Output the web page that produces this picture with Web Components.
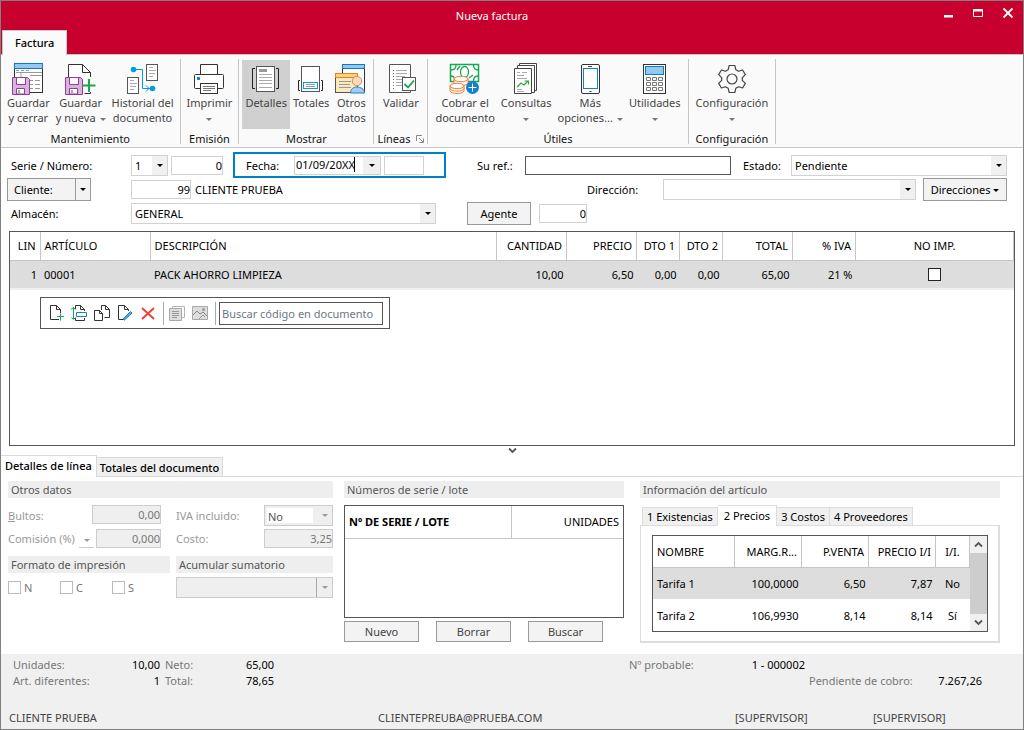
<!DOCTYPE html>
<html lang="es">
<head>
<meta charset="utf-8">
<meta name="viewport" content="width=device-width, initial-scale=1">
<title>Nueva factura</title>
<style>
  html, body { margin: 0; }
  body { font: 11px/15px "Noto Sans", "Open Sans", sans-serif; color: #000; background: #fff; }
</style>
</head>
<body>
<invoice-window></invoice-window>

<script>
/* Registers a custom element from its styles and markup. */
const base = `
  *, *::before, *::after { box-sizing: border-box; }
  :host { display: block; box-sizing: border-box; }
  button, input, select { font: inherit; color: inherit; margin: 0; border-radius: 0; }
  button { padding: 0; }
  input[type=text] { height: 19px; padding: 0 3px; border: 1px solid #d2d2d2; background: #fff; min-width: 0; outline: 0; }
  input.num { text-align: right; padding-right: 0; }
  .combo { position: relative; display: inline-flex; height: 21px; min-width: 0; }
  .combo select { appearance: none; flex: 1; width: 100%; height: 100%; padding: 0 16px 0 3px; border: 1px solid #d2d2d2; background: linear-gradient(#f0f0f0, #f0f0f0) right / 15px 100% no-repeat #fff; opacity: 1; }
  .combo::after { content: ""; position: absolute; right: 5px; top: 9px; border: 3px solid transparent; border-top-color: #000; border-bottom: 0; pointer-events: none; }
  .push { border: 1px solid #999; background: #f3f3f3; height: 23px; }
  .tri { display: inline-block; border: 3px solid transparent; border-top-color: currentColor; border-bottom: 0; vertical-align: middle; }
  table { border-collapse: collapse; width: 100%; table-layout: fixed; }
  th { font-weight: 400; text-align: left; }
  th, td { white-space: nowrap; overflow: hidden; text-overflow: ellipsis; padding: 0 4px; }
  .r { text-align: right; }
  .c { text-align: center; }
`;
function define(name, css, html, setup) {
  const template = document.createElement('template');
  template.innerHTML = `<style>${base}${css}</style>${html}`;
  customElements.define(name, class extends HTMLElement {
    constructor() {
      super();
      this.attachShadow({ mode: 'open' }).append(template.content.cloneNode(true));
    }
    connectedCallback() { if (setup) setup(this, this.shadowRoot); }
  });
}

/* ---- icons ---- */
const floppy = `<path d="M.5 14.500h15l2 2v15h-17z" fill="#d9b3dd" stroke="#8f3f97"/><path d="M4.500 14.500h9v7h-9z" fill="#fafafa" stroke="#8f3f97"/><path d="M4.500 31v-5.500h8V31z" fill="#fff" stroke="#8f3f97"/><path d="M7 27v3" stroke="#555"/>`;
const icons = {
  'save-close': [32, `<rect x="2.500" y="1.500" width="28" height="28" fill="#fff" stroke="#333"/><rect x="2.500" y=".5" width="28" height="5" fill="#92c9f1" stroke="#1478c8"/><path d="M4 7.500h3m2 0h3m2 0h3M4 9.500h26M18 12.500h12M9 9v5M18 17.500h3m2 0h5m-10 4h3m2 0h5m-10 4h3m2 0h5" stroke="#999" fill="none"/>${floppy}`],
  'save-new': [32, `<path d="M3.500 30V1.500h14l8 8V14M25.500 29v1.500h-6" fill="#fff" stroke="#333"/><path d="M17.500 1.500v8h8z" fill="#fff" stroke="#333"/>${floppy}<path d="M24 16v13M17.500 22.500h13" stroke="#16a74f" stroke-width="2" fill="none"/>`],
  history: [32, `<rect x="19.500" y="1.500" width="11" height="16" fill="#fff" stroke="#555"/><path d="M22 4.500h4m-4 3h7m-7 3h6m-6 3h4" stroke="#aaa"/><rect x=".5" y="14.500" width="11" height="16" fill="#fff" stroke="#555"/><path d="M3 17.500h4m-4 3h7m-7 3h6m-6 3h4" stroke="#aaa"/><path d="M6 6.500h9.500v19h10M19 22.500l3 3-3 3" fill="none" stroke="#069cdf"/><circle cx="6.500" cy="6.500" r="2.800" fill="#069cdf"/><circle cx="25.500" cy="25.500" r="2.800" fill="#069cdf"/>`],
  print: [32, `<path d="M7.500 11V1.500h17V11" fill="#fff" stroke="#333"/><rect x="1.500" y="11.500" width="29" height="14" rx="1" fill="#fff" stroke="#333"/><rect x="7.500" y="20.500" width="17" height="10" fill="#fff" stroke="#333"/><rect x="4" y="14" width="3" height="3" fill="#1a84d0"/><path d="M10 23.500h12m-12 2h12m-12 2h8" stroke="#777"/>`],
  details: [32, `<rect x="6.500" y="3.500" width="18" height="25" fill="#fff" stroke="#555"/><path d="M5 5.500H2.500v20H5M26 5.500h2.500v20H26" fill="none" stroke="#222"/><rect x="9" y="6" width="8" height="3" fill="#999"/><path d="M9 11.500h13m-13 3h13m-13 3h13m-13 3h13m-13 4h13" stroke="#aaa"/>`],
  totals: [32, `<rect x="6.500" y="3.500" width="18" height="25" fill="#fff" stroke="#555"/><path d="M5 17.500H3.500v10H5M26 17.500h1.500v10H26" fill="none" stroke="#222"/><rect x="8.500" y="19.500" width="14" height="6" fill="#fff" stroke="#069cdf"/><path d="M11 21.500h9m-9 2h9" stroke="#999"/>`],
  other: [32, `<rect x="7.500" y="1.500" width="22" height="28" fill="#fff" stroke="#333"/><rect x="7.500" y="1.500" width="22" height="4" fill="#92c9f1" stroke="#1478c8"/><rect x=".5" y="10.500" width="22" height="19" fill="#fbe9bd" stroke="#555"/><rect x=".5" y="10.500" width="22" height="4" fill="#ffd37e" stroke="#e08326"/><path d="M4 18.500h12m-12 3h11m-11 3h12" stroke="#999"/><path d="M15.500 30c0-4 3-6 6.500-6s7.500 2 7.500 6z" fill="#a3cdee" stroke="#1f7fc6"/><circle cx="22" cy="18" r="4.700" fill="#fbdabf" stroke="#e08a52"/>`],
  validate: [32, `<path d="M4.500 1.500h21v28h-21z" fill="#fff" stroke="#555"/><path d="M11 7.500h11m-11 3h11m-11 3h9m-9 3h6m-6 3h6m-6 3h6" stroke="#aaa"/><path d="M8.500 7v1m0 5v1m0 5v1m0 5v1" stroke="#d33"/><path d="M8.500 10v1m0 5v1m0 5v1" stroke="#16a74f"/><rect x="17.500" y="14.500" width="13" height="13" fill="#fff" stroke="#555"/><path d="M19.500 21l3.500 3.500 6-7" fill="none" stroke="#16a74f" stroke-width="1.800"/>`],
  cash: [32, `<path d="M1.500 1.500h28v17h-28z" fill="#fff" stroke="#16a74f" stroke-width="1.500"/><ellipse cx="15.500" cy="9" rx="4" ry="5.500" fill="none" stroke="#16a74f" stroke-width="1.300"/><path d="M2 7c3 0 5-2 5-5m22.500 5c-3 0-5-2-5-5M2 13c2 0 3 1 3 2m24.500-2c-3 0-5 2-5 5M8 7l3-4m9 12 4-3" fill="none" stroke="#16a74f" stroke-width="1.300"/><path d="M5 15.500v4c0 4 14 4 14 0v-4" fill="#fff" stroke="#ee7b30"/><ellipse cx="12" cy="16" rx="7" ry="2.700" fill="#fff" stroke="#ee7b30"/><path d="M1 22.500v5c0 4 14 4 14 0v-5" fill="#fff" stroke="#ee7b30"/><ellipse cx="8" cy="23" rx="7" ry="2.700" fill="#fff" stroke="#ee7b30"/><path d="M1 25.500c1 3.500 13 3.500 14 0" fill="none" stroke="#ee7b30"/><circle cx="23.500" cy="24.500" r="6.500" fill="#1481cc"/><path d="M23.500 20.500v8m-4-4h8" stroke="#fff"/>`],
  reports: [32, `<path d="M9.500.5h17v27h-17z" fill="#fff" stroke="#444"/><path d="M7.500 2.500h17v27h-17z" fill="#fff" stroke="#444"/><path d="M4.500 5.500h17v25h-17z" fill="#fff" stroke="#444"/><path d="M7 9.500h3m2 0h5M7 12.500h7m-7 3h10m-10 11h5m-5 2h7" stroke="#aaa"/><path d="M7 24l4-4 3 2 4-4m-3.500 0H18.500v3.500" fill="none" stroke="#36a832" stroke-width="1.200"/>`],
  phone: [32, `<rect x="7.500" y="1.500" width="18" height="29" rx="1.500" fill="#fff" stroke="#333"/><rect x="9.500" y="5.500" width="14" height="20" fill="#fff" stroke="#1481cc"/><path d="M14 3.500h4M15.500 28.500h2" stroke="#444"/>`],
  calc: [32, `<rect x="4.500" y="1.500" width="22" height="29" fill="#fff" stroke="#333"/><rect x="6.500" y="3.500" width="18" height="8" fill="#92c9f1" stroke="#1478c8"/><path d="M7.500 14.500h4v3h-4zm6 0h4v3h-4zm6 0h4v3h-4zm-12 5h4v3h-4zm6 0h4v3h-4zm6 0h4v3h-4zm-12 5h4v3h-4zm6 0h4v3h-4zm6 0h4v3h-4z" fill="#fff" stroke="#777"/>`],
  gear: [32, `<path d="M13.200 3.500h5.600l1 4.200 2.800 1.600 4-1.300 2.700 4.600-3 3v2.800l3 3-2.700 4.600-4-1.300-2.800 1.600-1 4.200h-5.600l-1-4.200-2.800-1.600-4 1.300-2.700-4.600 3-3v-2.800l-3-3 2.700-4.600 4 1.300 2.800-1.600z" transform="translate(0 -1)" fill="none" stroke="#444" stroke-width="1.200" stroke-linejoin="round"/><circle cx="16" cy="16" r="5" fill="none" stroke="#444" stroke-width="1.200"/>`],
  'doc-add': [16, `<path d="M11 14.500H2.500v-14h6l4 4V8M8.500.5v4h4" fill="none" stroke="#333"/><path d="M12.500 8.500v7M9 11.500h7" stroke="#16a74f"/>`],
  'doc-insert': [16, `<path d="M4.500 4V.5h5l4 4V6M9.500.5v4h4M4.500 13v2.500h9V13" fill="none" stroke="#333"/><path d="M5.500 7.500h10v4h-10z" fill="#fff" stroke="#1481cc"/><path d="M2.500 2v12M0 4.500l2.500-2 2 2m-4 8 2 2 2-2" fill="none" stroke="#16a74f"/>`],
  'doc-copy': [16, `<path d="M7.500 5V.5h4l4 4v8h-5M11.500.5v4h4" fill="none" stroke="#333"/><path d="M.5 5.500h5l3 3v7h-8zM5.500 5.500v3h3" fill="#fff" stroke="#333"/>`],
  'doc-edit': [16, `<path d="M8 14.500H1.500v-14h6l4 4V6M7.500.5v4h4" fill="none" stroke="#333"/><path d="M6 14l7.500-7.500 1.500 1.500-7.500 7z" fill="#59aae4" stroke="#1481cc"/>`],
  remove: [16, `<path d="M2 3l12 11M14 3L2 14" stroke="#ee4238" stroke-width="2"/>`],
  stack: [16, `<path d="M3.500 3V1.500h12v11H13" fill="none" stroke="#b5b5b5"/><path d="M.5 3.500h12v12H.5z" fill="#ddd" stroke="#aaa"/><path d="M3 6.500h7m-7 2h7m-7 2h7m-7 2h5" stroke="#999"/>`],
  image: [16, `<path d="M.5 1.500h15v13H.5z" fill="#ddd" stroke="#aaa"/><path d="M1 10l4-4 3 3 3-2 4 4" fill="none" stroke="#888"/><path d="M7 14l4-4 2 2" fill="none" stroke="#999"/><circle cx="11.500" cy="4.500" r="1.500" fill="#999"/>`],
  minimize: [12, `<path d="M2 8h9v2.500H2z" fill="#fff"/>`],
  maximize: [12, `<path d="M1.500 2.500h9v7h-9z" fill="none" stroke="#fff"/><path d="M1 2.500h10v2H1z" fill="#fff"/>`],
  close: [12, `<path d="M1.500 1.500l9 9m0-9l-9 9" stroke="#fff" stroke-width="1.800"/>`],
  launcher: [8, `<path d="M.5 6V.5H6M3 3l4 4M7.500 3.500v4h-4" fill="none" stroke="#888"/>`],
  'chevron-down': [9, `<path d="M1 2.500l3.500 3.500L8 2.500" fill="none" stroke="#555" stroke-width="1.800"/>`],
  'chevron-up': [9, `<path d="M1 6.500l3.500-3.500L8 6.500" fill="none" stroke="#555" stroke-width="1.800"/>`]
};
define('ui-icon', `:host { display: inline-flex; } svg { display: block; }`, ``, (el, root) => {
  if (root.querySelector('svg')) return;
  const [size, body] = icons[el.getAttribute('name')];
  root.innerHTML += `<svg width="${size}" height="${size}" viewBox="0 0 ${size} ${size}" fill="none" aria-hidden="true">${body}</svg>`;
});

/* ---- title bar ---- */
define('title-bar', `
  :host { background: #c8002d; color: #fff; }
  .top { display: flex; height: 29px; }
  h1 { flex: 1; margin: 0; padding-left: 50px; font-size: 11px; font-weight: 400; line-height: 29px; text-align: center; }
  .top button { width: 30px; height: 24px; border: 0; background: none; display: flex; align-items: center; justify-content: center; }
  .tabs { display: flex; padding-left: 1px; }
  .tabs button { position: relative; height: 25px; margin-bottom: -1px; padding: 0 12px 1px; border: 1px solid #c8c8c8; border-bottom: 0; background: #fafafa; color: #000; font-weight: 500; }`,
  `<div class="top"><h1>Nueva factura</h1>
    <button aria-label="Minimizar"><ui-icon name="minimize"></ui-icon></button>
    <button aria-label="Maximizar"><ui-icon name="maximize"></ui-icon></button>
    <button aria-label="Cerrar"><ui-icon name="close"></ui-icon></button></div>
  <div class="tabs" role="tablist"><button role="tab" aria-selected="true">Factura</button></div>`);

/* ---- ribbon ---- */
define('ribbon-button', `
  button { display: flex; flex-direction: column; align-items: center; height: 69px; padding: 3px 3px 0; border: 0; background: none; color: #444; }
  :host([selected]) button { background: #d0d0d0; }
  .tri { display: none; margin-left: 4px; color: #777; }
  :host([menu]) .tri { display: inline-block; }
  :host([below]) .tri { margin-left: 0; }
  span { text-align: center; white-space: nowrap; }`,
  `<button><span><slot></slot><i class="tri"></i></span></button>`,
  (el, root) => {
    if (root.querySelector('ui-icon')) return;
    const icon = document.createElement('ui-icon');
    icon.setAttribute('name', el.getAttribute('icon'));
    root.querySelector('button').prepend(icon);
  });
define('ribbon-group', `
  :host { border-right: 1px solid #c6c6c6; padding: 1px 3px 0; }
  :host([roomy]) { padding: 1px 4px 0; }
  .row { display: flex; justify-content: center; height: 72px; }
  footer { display: flex; justify-content: center; align-items: center; gap: 6px; line-height: 13px; color: #111; }`,
  `<div class="row"><slot></slot></div><footer><slot name="label"></slot></footer>`);
define('app-ribbon', `
  :host { display: flex; height: 94px; padding: 4px 0 3px; background: #fafafa; border: solid #c6c6c6; border-width: 1px 0; }
  button { border: 0; background: none; display: flex; }`,
  `<ribbon-group>
    <ribbon-button icon="save-close">Guardar<br>y cerrar</ribbon-button>
    <ribbon-button icon="save-new" menu>Guardar<br>y nueva</ribbon-button>
    <ribbon-button icon="history">Historial del<br>documento</ribbon-button>
    <span slot="label">Mantenimiento</span></ribbon-group>
  <ribbon-group><ribbon-button icon="print" menu below>Imprimir<br></ribbon-button><span slot="label">Emisión</span></ribbon-group>
  <ribbon-group>
    <ribbon-button icon="details" selected>Detalles</ribbon-button>
    <ribbon-button icon="totals">Totales</ribbon-button>
    <ribbon-button icon="other">Otros<br>datos</ribbon-button>
    <span slot="label">Mostrar</span></ribbon-group>
  <ribbon-group><ribbon-button icon="validate">Validar</ribbon-button>
    <span slot="label">Líneas</span><button slot="label" aria-label="Opciones de líneas"><ui-icon name="launcher"></ui-icon></button></ribbon-group>
  <ribbon-group roomy>
    <ribbon-button icon="cash">Cobrar el<br>documento</ribbon-button>
    <ribbon-button icon="reports" menu below>Consultas<br></ribbon-button>
    <ribbon-button icon="phone" menu>Más<br>opciones...</ribbon-button>
    <ribbon-button icon="calc" menu below>Utilidades<br></ribbon-button>
    <span slot="label">Útiles</span></ribbon-group>
  <ribbon-group roomy><ribbon-button icon="gear" menu below>Configuración<br></ribbon-button><span slot="label">Configuración</span></ribbon-group>`);

/* ---- invoice header form ---- */
define('invoice-form', `
  :host { padding: 5px 16px 6px 6px; }
  .row { display: flex; align-items: center; height: 24px; }
  .row:first-child { height: 26px; }
  .row > * { flex: none; }
  .name { width: 124px; padding-left: 4px; }
  .gap { flex: 1; }
  .serie { width: 37px; margin-right: 3px; }
  .n52 { width: 52px; }
  .date { display: flex; align-items: center; width: 213px; height: 26px; margin-left: 10px; padding-left: 11px; border: 2px solid #0080c9; }
  .date label { width: 48px; }
  .picker { display: flex; width: 87px; height: 19px; margin-right: 3px; border: 1px solid #d2d2d2; }
  .picker input { width: 60px; height: 15px; padding: 0 0 0 1px; border: 0; border-right: 1px solid #000; }
  .picker button { width: 17px; margin-left: auto; border: 0; background: #f0f0f0; }
  .picker button, .split button { display: flex; align-items: center; justify-content: center; }
  .date > input { width: 40px; }
  .dark { width: 206px; border-color: #555 !important; }
  .split { display: flex; width: 84px; margin-right: 40px; }
  .split .push:first-child { width: 68px; padding-left: 6px; border-right: 0; justify-content: flex-start; }
  .split .push:last-child { flex: 1; }`,
  `<div class="row">
    <label class="name" for="serie">Serie / Número:</label>
    <span class="combo serie"><select id="serie"><option>1</option></select></span>
    <input class="num n52" type="text" value="0" aria-label="Número">
    <div class="date"><label for="fecha">Fecha:</label>
      <span class="picker"><input id="fecha" type="text" value="01/09/20XX"><button aria-label="Abrir calendario"><i class="tri"></i></button></span>
      <input type="text" aria-label="Hora"></div>
    <label for="ref" style="width:48px;margin-left:31px">Su ref.:</label>
    <input id="ref" class="dark" type="text">
    <label for="estado" style="width:48px;margin-left:12px">Estado:</label>
    <span class="combo" style="flex:1"><select id="estado"><option>Pendiente</option></select></span>
  </div>
  <div class="row">
    <span class="split"><button class="push">Cliente:</button><button class="push" aria-label="Opciones de cliente"><i class="tri"></i></button></span>
    <input class="num" type="text" value="99" aria-label="Código de cliente" style="width:60px;margin-right:4px">
    <span>CLIENTE PRUEBA</span>
    <span class="gap"></span>
    <label for="dir" style="width:76px">Dirección:</label>
    <span class="combo" style="width:253px"><select id="dir"><option></option></select></span>
    <button class="push" style="width:84px;margin-left:7px">Direcciones <i class="tri"></i></button>
  </div>
  <div class="row">
    <label class="name" for="almacen">Almacén:</label>
    <span class="combo" style="width:305px"><select id="almacen"><option>GENERAL</option></select></span>
    <button class="push" style="width:64px;margin:0 8px 0 31px">Agente</button>
    <input class="num" type="text" value="0" aria-label="Código de agente" style="width:48px">
  </div>`);

/* ---- invoice lines ---- */
define('line-toolbar', `
  :host { display: flex; align-items: center; width: 350px; height: 32px; padding: 0 6px 0 7px; border: 1px solid #555; }
  button { display: flex; padding: 0; margin-right: 7px; border: 0; background: none; }
  hr { width: 1px; height: 23px; margin: 0 5px 0 0; border: 0; background: #aaa; }
  hr + input[type=text] { margin-left: -2px; }
  input[type=text] { flex: 1; height: 23px; padding: 0 2px; border-color: #555; }
  input::placeholder { color: #6e7685; opacity: 1; }`,
  `<button aria-label="Nueva línea"><ui-icon name="doc-add"></ui-icon></button>
  <button aria-label="Insertar línea"><ui-icon name="doc-insert"></ui-icon></button>
  <button aria-label="Duplicar línea"><ui-icon name="doc-copy"></ui-icon></button>
  <button aria-label="Modificar línea"><ui-icon name="doc-edit"></ui-icon></button>
  <button aria-label="Eliminar línea"><ui-icon name="remove"></ui-icon></button>
  <hr>
  <button aria-label="Detalle" disabled><ui-icon name="stack"></ui-icon></button>
  <button aria-label="Imagen" disabled><ui-icon name="image"></ui-icon></button>
  <hr>
  <input type="text" placeholder="Buscar código en documento" aria-label="Buscar código en documento">`);
define('invoice-lines', `
  :host { display: flex; flex-direction: column; flex: 1; padding: 0 8px; }
  .box { flex: 1; border: 1px solid #555; min-height: 120px; }
  th { height: 28px; border-right: 1px solid #c6c6c6; border-bottom: 1px solid #c6c6c6; }
  td { height: 29px; background: #ddd; }
  td.r { padding-right: 3px; }
  tbody tr { border-bottom: 2px solid #f0f0f0; }
  input[type=checkbox] { appearance: none; display: block; width: 13px; height: 13px; margin: 0 auto; border: 1px solid #222; background: #fff; }
  line-toolbar { margin: 7px 0 0 30px; }
  .more { display: flex; width: 100%; height: 9px; justify-content: center; border: 0; background: none; }`,
  `<div class="box"><table>
    <colgroup><col style="width:30px"><col style="width:110px"><col><col style="width:70px"><col style="width:70px"><col style="width:43px"><col style="width:43px"><col style="width:70px"><col style="width:63px"><col style="width:158px"></colgroup>
    <thead><tr><th class="r">LIN</th><th>ARTÍCULO</th><th>DESCRIPCIÓN</th><th class="r">CANTIDAD</th><th class="r">PRECIO</th><th class="r">DTO 1</th><th class="r">DTO 2</th><th class="r">TOTAL</th><th class="r">% IVA</th><th class="c">NO IMP.</th></tr></thead>
    <tbody><tr><td class="r">1</td><td>00001</td><td>PACK AHORRO LIMPIEZA</td><td class="r">10,00</td><td class="r">6,50</td><td class="r">0,00</td><td class="r">0,00</td><td class="r">65,00</td><td class="r">21 %</td><td><input type="checkbox" aria-label="No imprimir"></td></tr></tbody>
  </table>
  <line-toolbar></line-toolbar></div>
  <button class="more" aria-label="Contraer detalles"><ui-icon name="chevron-down"></ui-icon></button>`);

/* ---- detail panels ---- */
define('section-title', `
  :host { height: 17px; padding-left: 3px; line-height: 17px; background: #eee; color: #555; }`, `<slot></slot>`);

define('line-extras', `
  :host { display: grid; grid-template-columns: 162fr 157fr; column-gap: 6px; color: #999; }
  .all { grid-column: 1 / -1; }
  .rows { display: grid; row-gap: 3px; margin: 7px 0 8px; }
  .row { display: flex; align-items: flex-start; justify-content: space-between; height: 19px; line-height: 19px; }
  .rows .row:first-child { height: 21px; line-height: 21px; }
  .left .row { padding-right: 9px; }
  input[type=text], .combo select { background-color: #efefef; color: #777; border-color: #ccc; }
  .w69 { width: 69px; } .w65 { width: 65px; }
  .combo::after { border-top-color: #999; }
  .iva select { box-shadow: inset 0 0 0 2px #efefef; background: linear-gradient(#efefef, #efefef) right / 19px 100% no-repeat #fff; color: #555; }
  .mini { width: 15px; height: 19px; margin-left: auto; margin-right: 2px; border: 0; border-bottom: 1px solid #ccc; background: none; }
  .checks { display: flex; margin-top: 8px; }
  .checks label { display: flex; width: 52px; gap: 3px; align-items: center; height: 13px; color: #777; }
  input[type=checkbox] { appearance: none; width: 13px; height: 13px; border: 1px solid #bbb; background: #fff; }
  .sum { margin-top: 4px; }
  .sum select { background: linear-gradient(#aaa, #aaa) right 15px top / 1px 100% no-repeat #efefef; }`,
  `<section-title class="all">Otros datos</section-title>
  <div class="rows left">
    <div class="row"><label for="bultos"><u>B</u>ultos:</label><input id="bultos" class="num w69" type="text" value="0,00" disabled></div>
    <div class="row"><label for="comision">Comisión (%)</label><button class="mini" aria-label="Tipo de comisión" disabled><i class="tri"></i></button><input id="comision" class="num w65" type="text" value="0,000" disabled></div>
  </div>
  <div class="rows">
    <div class="row"><label for="iva">IVA incluido:</label><span class="combo iva w69"><select id="iva" disabled><option>No</option></select></span></div>
    <div class="row"><label for="costo">Costo:</label><input id="costo" class="num w69" type="text" value="3,25" disabled></div>
  </div>
  <section-title>Formato de impresión</section-title>
  <section-title>Acumular sumatorio</section-title>
  <div class="checks"><label><input type="checkbox" disabled>N</label><label><input type="checkbox" disabled>C</label><label><input type="checkbox" disabled>S</label></div>
  <span class="combo sum"><select aria-label="Acumular sumatorio" disabled><option></option></select></span>`);

define('serial-numbers', `
  .box { height: 113px; margin: 7px 0 3px; border: 1px solid #555; }
  th { height: 32px; border-bottom: 1px solid #c6c6c6; }
  th:first-child { font-weight: 700; border-right: 1px solid #c6c6c6; }
  .bar { display: flex; gap: 17px; }
  .push { width: 75px; height: 21px; color: #444; }`,
  `<section-title>Números de serie / lote</section-title>
  <div class="box"><table><colgroup><col><col style="width:112px"></colgroup><thead><tr><th>Nº DE SERIE / LOTE</th><th class="r">UNIDADES</th></tr></thead></table></div>
  <div class="bar"><button class="push">Nuevo</button><button class="push">Borrar</button><button class="push">Buscar</button></div>`);

define('article-info', `
  .tabs { display: flex; align-items: flex-end; height: 20px; margin-top: 7px; padding-left: 2px; }
  .tabs button { height: 18px; padding: 0 4px; border: 1px solid #ddd; border-left: 0; border-bottom: 0; background: #f0f0f0; color: #000; }
  .tabs button:first-child { border-left: 1px solid #ddd; }
  .tabs .on { position: relative; height: 21px; margin-bottom: -1px; padding: 0 6px 2px; background: #fff; }
  .panel { padding: 9px 10px 9px 11px; border: 1px solid #ddd; border-width: 1px 2px 2px 1px; }
  .box { display: flex; height: 97px; border: 1px solid #555; overflow: hidden; }
  table { flex: 1; width: auto; min-width: 0; }
  th { height: 31px; border-bottom: 1px solid #c6c6c6; border-right: 1px solid #c6c6c6; }
  td { height: 32px; }
  td.r { padding-right: 3px; }
  .sel td { background: #ddd; }
  .rail { display: flex; flex-direction: column; width: 17px; background: #f0f0f0; }
  .rail button { display: flex; align-items: center; justify-content: center; height: 17px; border: 0; background: none; }
  .rail i { flex: 1; background: #cdcdcd; }`,
  `<section-title>Información del artículo</section-title>
  <div class="tabs" role="tablist"><button role="tab">1 Existencias</button><button role="tab" class="on" aria-selected="true">2 Precios</button><button role="tab">3 Costos</button><button role="tab">4 Proveedores</button></div>
  <div class="panel"><div class="box">
    <table><colgroup><col><col style="width:67px"><col style="width:67px"><col style="width:67px"><col style="width:34px"></colgroup>
    <thead><tr><th>NOMBRE</th><th class="r">MARG.R...</th><th class="r">P.VENTA</th><th class="r">PRECIO I/I</th><th class="c">I/I.</th></tr></thead>
    <tbody><tr class="sel"><td>Tarifa 1</td><td class="r">100,0000</td><td class="r">6,50</td><td class="r">7,87</td><td class="c">No</td></tr>
    <tr><td>Tarifa 2</td><td class="r">106,9930</td><td class="r">8,14</td><td class="r">8,14</td><td class="c">Sí</td></tr></tbody></table>
    <div class="rail"><button aria-label="Subir"><ui-icon name="chevron-up"></ui-icon></button><i></i><button aria-label="Bajar"><ui-icon name="chevron-down"></ui-icon></button></div>
  </div></div>`);

define('detail-panels', `
  .tabs { display: flex; align-items: flex-end; height: 22px; border-bottom: 1px solid #d9d9d9; }
  .tabs button { height: 19px; padding: 0 3px; border: 1px solid #d9d9d9; border-left: 0; border-bottom: 0; background: #f0f0f0; color: #000; font-weight: 500; }
  .tabs .on { position: relative; height: 22px; margin-bottom: -1px; padding: 0 4px 2px; background: #fff; }
  .cols { display: grid; grid-template-columns: 336fr 296fr 360fr; padding: 4px 23px 11px 7px; }
  line-extras { padding-right: 11px; align-self: start; }
  serial-numbers { padding-right: 16px; }`,
  `<div class="tabs" role="tablist"><button role="tab" class="on" aria-selected="true">Detalles de línea</button><button role="tab">Totales del documento</button></div>
  <div class="cols"><line-extras></line-extras><serial-numbers></serial-numbers><article-info></article-info></div>`);

/* ---- status area ---- */
define('status-summary', `
  :host { padding: 3px 8px 3px; background: #f0f0f0; color: #444; }
  dl { display: grid; grid-template-columns: 82px 65px 50px 64px 1fr 66px 110px 4px 104px 69px 33px; grid-auto-flow: dense; line-height: 16px; margin: 0 0 21px 4px; color: #000; }
  dt { color: #777; }
  dd { margin: 0; text-align: right; }
  dt, dd { grid-row: 1; white-space: nowrap; }
  .two { grid-row: 2; }
  .a { grid-column: 1; } .b { grid-column: 2; } .c3 { grid-column: 3; padding-left: 5px; } .d { grid-column: 4; }
  .e { grid-column: 6; } .f { grid-column: 7; } .g { grid-column: 9; } .h { grid-column: 10; }
  .people { display: grid; grid-template-columns: 369px 1fr 138px 142px; line-height: 16px; }`,
  `<dl><dt class="a">Unidades:</dt><dd class="b">10,00</dd><dt class="c3">Neto:</dt><dd class="d">65,00</dd><dt class="e">Nº probable:</dt><dd class="f">1 - 000002</dd>
  <dt class="a two">Art. diferentes:</dt><dd class="b two">1</dd><dt class="c3 two">Total:</dt><dd class="d two">78,65</dd><dt class="g two">Pendiente de cobro:</dt><dd class="h two">7.267,26</dd></dl>
  <div class="people"><span>CLIENTE PRUEBA</span><span>CLIENTEPREUBA@PRUEBA.COM</span><span>[SUPERVISOR]</span><span>[SUPERVISOR]</span></div>`);

define('invoice-window', `
  :host { display: flex; flex-direction: column; min-height: 100vh; border: 1px solid #808080; background: #fff; }`,
  `<title-bar></title-bar><app-ribbon></app-ribbon><invoice-form></invoice-form><invoice-lines></invoice-lines><detail-panels></detail-panels><status-summary></status-summary>`);
</script>
</body>
</html>
